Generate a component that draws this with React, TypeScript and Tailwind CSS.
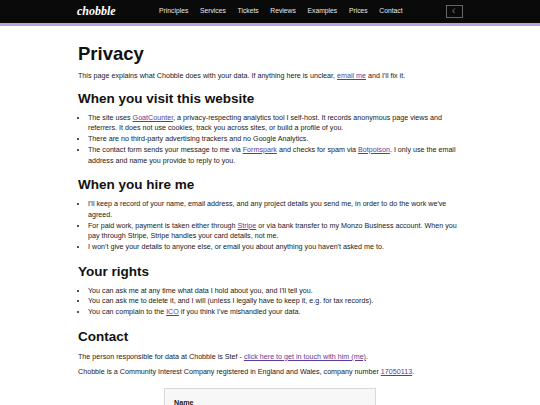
const NAV = ["Principles", "Services", "Tickets", "Reviews", "Examples", "Prices", "Contact"];

function Link({ children }: { children: string }) {
  return <a className="text-[#5b3d99] underline">{children}</a>;
}

export default function App() {
  return (
    <div
      className="h-[405px] w-[540px] overflow-hidden bg-white text-[7.17px] leading-[10.7px] text-[#1a1a1a]"
      style={{ fontFamily: '"Liberation Sans", Arial, sans-serif' }}
    >
      {/* Header */}
      <header className="flex h-[26px] items-center border-b-[3px] border-[#b5a2dc] bg-[#0a0a0a] pl-[77px]">
        <span className="w-[82px] text-[12px] font-bold italic text-white" style={{ fontFamily: '"Liberation Serif", serif' }}>
          chobble
        </span>
        <nav className="flex w-[287px] gap-[11.7px] text-[6.75px] text-[#e8e8e8]">
          {NAV.map((n) => (
            <span key={n}>{n}</span>
          ))}
        </nav>
        <button className="flex h-[13px] w-[17px] items-center justify-center border border-[#666] text-[6px] text-[#ccc]">
          ☾
        </button>
      </header>

      <main className="px-[78px]">
        <h1 className="mt-[15px] text-[18.5px] leading-[25px] font-bold text-[#111]">Privacy</h1>
        <p className="mt-[5px]">
          This page explains what Chobble does with your data. If anything here is unclear, <Link>email me</Link> and I'll fix it.
        </p>

        <h2 className="mt-[8px] text-[13.5px] leading-[18px] font-bold text-[#111]">When you visit this website</h2>
        <ul className="mt-[5px] list-disc pl-[10px]">
          <li>
            The site uses <Link>GoatCounter</Link>, a privacy-respecting analytics tool I self-host. It records anonymous page views and referrers. It does not use cookies, track you across sites, or build a profile of you.
          </li>
          <li>There are no third-party advertising trackers and no Google Analytics.</li>
          <li>
            The contact form sends your message to me via <Link>Formspark</Link> and checks for spam via <Link>Botpoison</Link>. I only use the email address and name you provide to reply to you.
          </li>
        </ul>

        <h2 className="mt-[10px] text-[13.5px] leading-[18px] font-bold text-[#111]">When you hire me</h2>
        <ul className="mt-[5px] list-disc pl-[10px]">
          <li>I'll keep a record of your name, email address, and any project details you send me, in order to do the work we've agreed.</li>
          <li>
            For paid work, payment is taken either through <Link>Stripe</Link> or via bank transfer to my Monzo Business account. When you pay through Stripe, Stripe handles your card details, not me.
          </li>
          <li>I won't give your details to anyone else, or email you about anything you haven't asked me to.</li>
        </ul>

        <h2 className="mt-[10px] text-[13.5px] leading-[18px] font-bold text-[#111]">Your rights</h2>
        <ul className="mt-[5px] list-disc pl-[10px]">
          <li>You can ask me at any time what data I hold about you, and I'll tell you.</li>
          <li>You can ask me to delete it, and I will (unless I legally have to keep it, e.g. for tax records).</li>
          <li>
            You can complain to the <Link>ICO</Link> if you think I've mishandled your data.
          </li>
        </ul>

        <h2 className="mt-[10px] text-[13.5px] leading-[18px] font-bold text-[#111]">Contact</h2>
        <p className="mt-[6px]">
          The person responsible for data at Chobble is Stef - <Link>click here to get in touch with him (me)</Link>.
        </p>
        <p className="mt-[4px]">
          Chobble is a Community Interest Company registered in England and Wales, company number <Link>17050113</Link>.
        </p>

        {/* Form card */}
        <div className="mx-auto mt-[11px] h-[60px] w-[212px] border border-[#d9d9d9] bg-[#f7f7f7] px-[9px] pt-[9px] font-bold">
          Name
        </div>
      </main>
    </div>
  );
}
